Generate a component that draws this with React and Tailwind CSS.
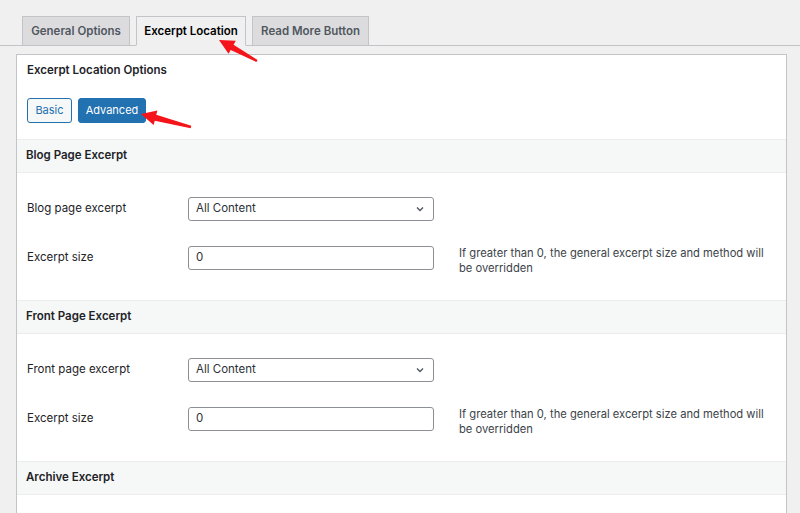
import React from "react";

const FONT = { fontFamily: "Inter, 'Liberation Sans', sans-serif" };

// builds the polygon for a tapered annotation arrow
function arrowPoints(tip, tail, head = 15, headHalf = 7.5, neck = 3, tailHalf = 1.2) {
  const dx = tail[0] - tip[0];
  const dy = tail[1] - tip[1];
  const len = Math.hypot(dx, dy);
  const ux = dx / len;
  const uy = dy / len;
  const px = -uy;
  const py = ux;
  const bx = tip[0] + ux * head;
  const by = tip[1] + uy * head;
  const pts = [
    [tip[0], tip[1]],
    [bx + px * headHalf, by + py * headHalf],
    [bx + px * neck, by + py * neck],
    [tail[0] + px * tailHalf, tail[1] + py * tailHalf],
    [tail[0] - px * tailHalf, tail[1] - py * tailHalf],
    [bx - px * neck, by - py * neck],
    [bx - px * headHalf, by - py * headHalf],
  ];
  return pts.map((p) => p.join(",")).join(" ");
}

function SectionHeader({ title }) {
  return (
    <div className="h-[34px] flex items-center pl-[9px] bg-[#f6f7f7] border-y border-[#ececec] text-[11.5px] font-semibold text-[#1d2327]">
      {title}
    </div>
  );
}

function Chevron() {
  return (
    <svg width="10" height="10" viewBox="0 0 10 10" className="text-[#50575e]">
      <path d="M2 3.5 L5 6.5 L8 3.5" fill="none" stroke="currentColor" strokeWidth="1.4" />
    </svg>
  );
}

function Section({ title, selectLabel }) {
  return (
    <div>
      <SectionHeader title={title} />
      <div className="pt-[24px] pb-[30px] pl-[10px] flex flex-col gap-[25px]">
        <div className="flex items-center h-[24px]">
          <div className="w-[161px] text-[11.5px] text-[#1d2327]">{selectLabel}</div>
          <div className="w-[246px] h-[24px] border border-[#8c8f94] rounded-[3px] flex items-center justify-between pl-[7px] pr-[8px] text-[11.5px] text-[#2c3338]">
            <span>All Content</span>
            <Chevron />
          </div>
        </div>
        <div className="flex items-center h-[24px]">
          <div className="w-[161px] text-[11.5px] text-[#1d2327]">Excerpt size</div>
          <div className="w-[246px] h-[24px] border border-[#8c8f94] rounded-[3px] flex items-center pl-[7px] text-[11.5px] text-[#2c3338]">
            0
          </div>
          <p className="ml-[25px] mt-[6px] w-[315px] text-[11.2px] leading-[15px] text-[#3c434a]">
            If greater than 0, the general excerpt size and method will be overridden
          </p>
        </div>
      </div>
    </div>
  );
}

export default function App() {
  const tabs = [
    { label: "General Options", w: "w-[108px]" },
    { label: "Excerpt Location", w: "w-[110px]", active: true },
    { label: "Read More Button", w: "w-[117px]" },
  ];

  return (
    <div className="relative w-[800px] h-[513px] overflow-hidden bg-[#f0f0f1]" style={FONT}>
      {/* tabs */}
      <div className="pt-[16px] pl-[16px] flex border-b border-[#c3c4c7]">
        {tabs.map((t) => (
          <div
            key={t.label}
            className={`${t.w} ml-[6px] h-[30px] -mb-px pt-[1px] flex items-center justify-center border text-[11.5px] font-semibold ${
              t.active
                ? "bg-[#f0f0f1] border-[#c3c4c7] border-b-[#f0f0f1] text-[#000]"
                : "bg-[#dcdcde] border-[#c3c4c7] text-[#50575e]"
            }`}
          >
            {t.label}
          </div>
        ))}
      </div>

      {/* panel */}
      <div className="mt-[8px] ml-[16px] w-[771px] bg-white border border-[#c3c4c7]">
        <div className="pt-[8px] pl-[10px] text-[11.5px] leading-[15px] font-semibold text-[#1d2327]">
          Excerpt Location Options
        </div>
        <div className="flex gap-[6px] pl-[10px] mt-[20px] mb-[16px]">
          <div className="w-[45px] h-[25px] flex items-center justify-center border border-[#2271b1] rounded-[3px] bg-[#f6f7f7] text-[11px] text-[#2271b1]">
            Basic
          </div>
          <div className="w-[68px] h-[25px] flex items-center justify-center border border-[#2271b1] rounded-[3px] bg-[#2271b1] text-[11px] text-white">
            Advanced
          </div>
        </div>
        <Section title="Blog Page Excerpt" selectLabel="Blog page excerpt" />
        <Section title="Front Page Excerpt" selectLabel="Front page excerpt" />
        <SectionHeader title="Archive Excerpt" />
        <div className="h-[40px]" />
      </div>

      {/* annotation arrows */}
      <svg className="absolute inset-0 pointer-events-none" width="800" height="513">
        <polygon points={arrowPoints([219, 40], [257, 61])} fill="#f5141a" />
        <polygon points={arrowPoints([141, 114], [191, 127])} fill="#f5141a" />
      </svg>
    </div>
  );
}
